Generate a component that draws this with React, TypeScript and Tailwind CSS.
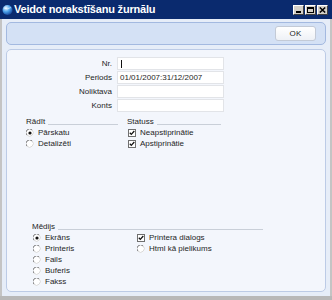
import React from "react";

function Radio({ on }: { on?: boolean }) {
  return (
    <svg width="8" height="8" viewBox="0 0 8 8" className="shrink-0">
      <circle cx="4" cy="4" r="3.5" fill="#ffffff" />
      <path d="M1 6.2 A3.5 3.5 0 0 1 6.2 1" stroke="#7d7d7d" strokeWidth="1" fill="none" />
      <path d="M6.2 1 A3.5 3.5 0 0 1 1 6.2" stroke="#d8d8d8" strokeWidth="1" fill="none" />
      {on && <circle cx="4" cy="4" r="1.6" fill="#111" />}
    </svg>
  );
}

function Check() {
  return (
    <svg width="8" height="8" viewBox="0 0 8 8" className="shrink-0">
      <rect x="0.5" y="0.5" width="7" height="7" fill="#fff" stroke="#6f6f6f" />
      <path d="M1.8 3.8 L3.3 5.4 L6.3 2" stroke="#111" strokeWidth="1.3" fill="none" />
    </svg>
  );
}

function Header({ label, className }: { label: string; className?: string }) {
  return (
    <div className={"flex items-center h-[11px] " + (className ?? "")}>
      <span className="leading-[11px]">{label}</span>
      <div className="flex-1 ml-[3px] mt-[5px] h-px bg-[#c9cfd8]" />
    </div>
  );
}

function RadioRow({ label, on }: { label: string; on?: boolean }) {
  return (
    <div className="flex items-center h-[11px] gap-[4px]">
      <Radio on={on} />
      <span className="leading-[11px]">{label}</span>
    </div>
  );
}

function CheckRow({ label }: { label: string }) {
  return (
    <div className="flex items-center h-[11px] gap-[4px]">
      <Check />
      <span className="leading-[11px]">{label}</span>
    </div>
  );
}

function Field({ label, value, cursor }: { label: string; value?: string; cursor?: boolean }) {
  return (
    <div className="flex items-center h-[13px]">
      <div className="w-[105px] text-right leading-[13px]">{label}</div>
      <div className="ml-[5px] w-[107px] h-[13px] bg-white border border-[#e2e4e8] flex items-center pl-[2px] leading-[11px]">
        {cursor && <div className="w-px h-[8px] bg-[#111] ml-[1px]" />}
        {value}
      </div>
    </div>
  );
}

export default function App() {
  return (
    <div className="w-[332px] h-[300px] bg-[#c4c4c4] flex flex-col font-['Liberation_Sans',Arial,sans-serif] text-[8px] text-[#1e1e1e] overflow-hidden">
      <div className="h-[19px] bg-[#0a2a6e] flex items-center pl-[2px] pr-[4px] shrink-0">
        <svg width="11" height="12" viewBox="0 0 11 12" className="shrink-0">
          <defs>
            <radialGradient id="g" cx="35%" cy="30%" r="70%">
              <stop offset="0%" stopColor="#e8f4ff" />
              <stop offset="55%" stopColor="#4aa0e8" />
              <stop offset="100%" stopColor="#1b4fa3" />
            </radialGradient>
          </defs>
          <circle cx="5.5" cy="6" r="5" fill="url(#g)" />
          <path d="M2 4 Q5 6 9 3.5" stroke="#ffffff" strokeWidth="0.8" fill="none" opacity="0.7" />
        </svg>
        <span className="ml-[1px] text-white font-bold text-[11px] leading-[19px] tracking-[-0.2px]">Veidot norakstīšanu žurnālu</span>
        <div className="ml-auto flex gap-[1px]">
          {["min", "max", "close"].map((k) => (
            <div
              key={k}
              className="w-[11px] h-[10px] bg-[#d4d0c8] border-t border-l border-t-white border-l-white border-b border-r border-b-[#404040] border-r-[#404040] flex items-center justify-center"
            >
              {k === "min" && <div className="w-[5px] h-[2px] bg-black mt-[4px]" />}
              {k === "max" && <div className="w-[7px] h-[6px] border border-black border-t-2" />}
              {k === "close" && (
                <svg width="7" height="6" viewBox="0 0 7 6">
                  <path d="M0.8 0.5 L6.2 5.5 M6.2 0.5 L0.8 5.5" stroke="#000" strokeWidth="1.5" />
                </svg>
              )}
            </div>
          ))}
        </div>
      </div>
      <div className="flex-1 mx-[2px] bg-[#e6edf8] flex flex-col px-[4px] pt-[3px] pb-[4px] gap-[4px]">
        <div className="h-[23px] shrink-0 rounded-[5px] border border-[#a3b9e0] bg-[#d4e1f5] flex items-center justify-end pr-[9px]">
          <div className="w-[41px] h-[15px] rounded-[3px] border border-[#c3cad6] bg-[linear-gradient(#ffffff,#eef1f6)] flex items-center justify-center text-[8px] tracking-[0.3px]">
            OK
          </div>
        </div>
        <div className="flex-1 rounded-[5px] border border-[#bccbe6] bg-[#f3f6fc] flex flex-col pt-[7px] pb-[4px]">
          <div className="flex flex-col gap-[1px]">
            <Field label="Nr." cursor />
            <Field label="Periods" value="01/01/2007:31/12/2007" />
            <Field label="Noliktava" />
            <Field label="Konts" />
          </div>
          <div className="flex mt-[4px] ml-[19px]">
            <div className="w-[92px] flex flex-col">
              <Header label="Rādīt" />
              <RadioRow label="Pārskatu" on />
              <RadioRow label="Detalizēti" />
            </div>
            <div className="w-[94px] ml-[9px] flex flex-col">
              <Header label="Statuss" />
              <div className="pl-[1px]">
                <CheckRow label="Neapstiprinātie" />
                <CheckRow label="Apstiprinātie" />
              </div>
            </div>
          </div>
          <div className="mt-auto ml-[25px] w-[231px] flex flex-col">
            <Header label="Mēdijs" />
            <div className="flex">
              <div className="w-[105px] pl-[1px] flex flex-col">
                <RadioRow label="Ekrāns" on />
                <RadioRow label="Printeris" />
                <RadioRow label="Fails" />
                <RadioRow label="Buferis" />
                <RadioRow label="Fakss" />
              </div>
              <div className="flex flex-col">
                <CheckRow label="Printera dialogs" />
                <RadioRow label="Html kā pielikums" />
              </div>
            </div>
          </div>
        </div>
      </div>
      <div className="h-[4px] shrink-0 bg-[#b8b8b8]" />
    </div>
  );
}
